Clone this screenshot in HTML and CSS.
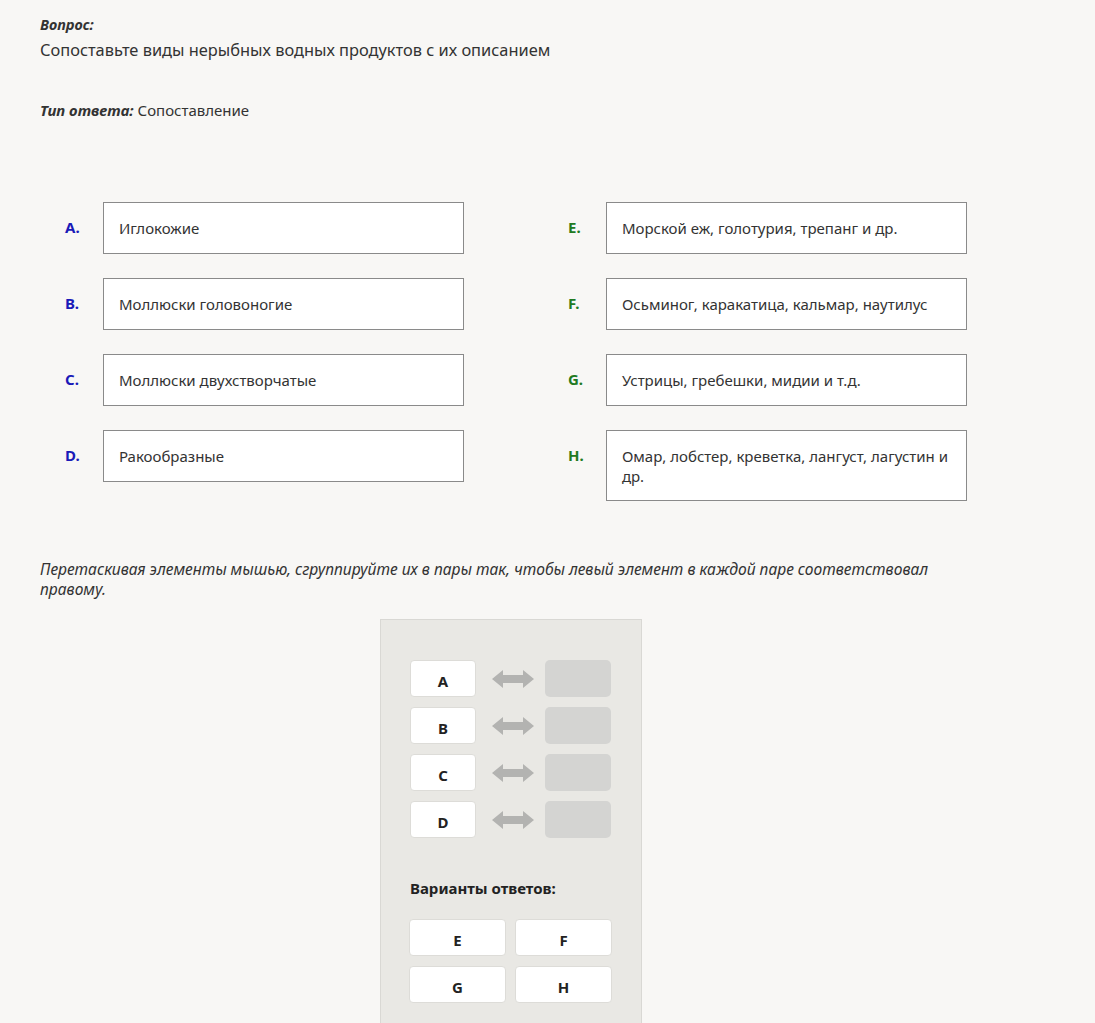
FILE: index.html
```html
<!DOCTYPE html>
<html lang="ru">
<head>
  <meta charset="utf-8">
  <title>Вопрос</title>
  <link rel="stylesheet" href="styles.css">
</head>
<body>
  <div class="question">
    <div class="caption">Вопрос:</div>
    <div class="question-text">Сопоставьте виды нерыбных водных продуктов с их описанием</div>
    <div class="answer-type"><span class="caption">Тип ответа:</span> Сопоставление</div>
  </div>

  <div class="pairs">
    <div class="column">
      <div class="item"><span class="letter left">A.</span><div class="card">Иглокожие</div></div>
      <div class="item"><span class="letter left">B.</span><div class="card">Моллюски головоногие</div></div>
      <div class="item"><span class="letter left">C.</span><div class="card">Моллюски двухстворчатые</div></div>
      <div class="item"><span class="letter left">D.</span><div class="card">Ракообразные</div></div>
    </div>
    <div class="column">
      <div class="item"><span class="letter right">E.</span><div class="card">Морской еж, голотурия, трепанг и др.</div></div>
      <div class="item"><span class="letter right">F.</span><div class="card">Осьминог, каракатица, кальмар, наутилус</div></div>
      <div class="item"><span class="letter right">G.</span><div class="card">Устрицы, гребешки, мидии и т.д.</div></div>
      <div class="item"><span class="letter right">H.</span><div class="card">Омар, лобстер, креветка, лангуст, лагустин и др.</div></div>
    </div>
  </div>

  <p class="hint">Перетаскивая элементы мышью, сгруппируйте их в пары так, чтобы левый элемент в каждой паре соответствовал правому.</p>

  <div class="board">
    <div class="match-row"><div class="chip">A</div><svg class="arrow" width="42" height="20" viewBox="0 0 42 20"><path d="M0 10 L11 1 L11 6 L31 6 L31 1 L42 10 L31 19 L31 14 L11 14 L11 19 Z" fill="#b3b3b1"/></svg><div class="slot"></div></div>
    <div class="match-row"><div class="chip">B</div><svg class="arrow" width="42" height="20" viewBox="0 0 42 20"><path d="M0 10 L11 1 L11 6 L31 6 L31 1 L42 10 L31 19 L31 14 L11 14 L11 19 Z" fill="#b3b3b1"/></svg><div class="slot"></div></div>
    <div class="match-row"><div class="chip">C</div><svg class="arrow" width="42" height="20" viewBox="0 0 42 20"><path d="M0 10 L11 1 L11 6 L31 6 L31 1 L42 10 L31 19 L31 14 L11 14 L11 19 Z" fill="#b3b3b1"/></svg><div class="slot"></div></div>
    <div class="match-row"><div class="chip">D</div><svg class="arrow" width="42" height="20" viewBox="0 0 42 20"><path d="M0 10 L11 1 L11 6 L31 6 L31 1 L42 10 L31 19 L31 14 L11 14 L11 19 Z" fill="#b3b3b1"/></svg><div class="slot"></div></div>

    <div class="variants-title">Варианты ответов:</div>
    <div class="variants">
      <div class="chip wide">E</div>
      <div class="chip wide">F</div>
      <div class="chip wide">G</div>
      <div class="chip wide">H</div>
    </div>
  </div>
</body>
</html>
```

FILE: styles.css
```css
body {
  background-color: #f8f7f5;
  margin: 0;
  padding: 14px 40px 0;
  font-family: 'Noto Sans', 'Open Sans', sans-serif;
  font-size: 15px;
  color: #333;
}

.caption {
  font-weight: bold;
  font-style: italic;
  font-size: 14.5px;
}

.answer-type .caption {
  font-size: 15px;
}

.question-text {
  font-size: 16.4px;
  margin-top: 4px;
}

.answer-type {
  margin-top: 39px;
}

.pairs {
  display: flex;
  gap: 104px;
  margin-top: 82px;
  padding-left: 25px;
}

.column {
  display: flex;
  flex-direction: column;
  gap: 24px;
  width: 399px;
}

.item {
  display: flex;
  align-items: flex-start;
}

.letter {
  width: 38px;
  padding-top: 15px;
  font-weight: bold;
  font-size: 15px;
}

.letter.left {
  color: #1a1ab8;
}

.letter.right {
  color: #217a21;
}

.card {
  box-sizing: border-box;
  width: 362px;
  min-height: 52px;
  padding: 15px 15px 14px;
  background: #fff;
  border: 1px solid #8a8a8a;
  line-height: 20px;
}

.hint {
  font-style: italic;
  font-size: 15.6px;
  line-height: 20px;
  width: 905px;
  margin: 58px 0 0;
}

.board {
  box-sizing: border-box;
  width: 262px;
  margin: 20px 0 0 340px;
  padding: 40px 29px 60px;
  background: #e9e8e4;
  border: 1px solid #d9d8d4;
  border-bottom: 0;
}

.match-row {
  display: flex;
  align-items: center;
  margin-bottom: 10px;
}

.chip {
  box-sizing: border-box;
  width: 66px;
  height: 37px;
  padding-top: 6px;
  background: #fff;
  border: 1px solid #dddcd8;
  border-radius: 4px;
  text-align: center;
  font-weight: bold;
  font-size: 15px;
  line-height: 28px;
  color: #222;
}

.arrow {
  margin: 0 11px 0 16px;
}

.slot {
  width: 66px;
  height: 37px;
  background: #d4d4d2;
  border-radius: 5px;
}

.variants-title {
  margin: 40px 0 21px;
  font-weight: bold;
  font-size: 15px;
  color: #222;
}

.variants {
  display: grid;
  grid-template-columns: 97px 97px;
  gap: 10px 9px;
  margin-left: -1px;
}

.chip.wide {
  width: 97px;
}
```
